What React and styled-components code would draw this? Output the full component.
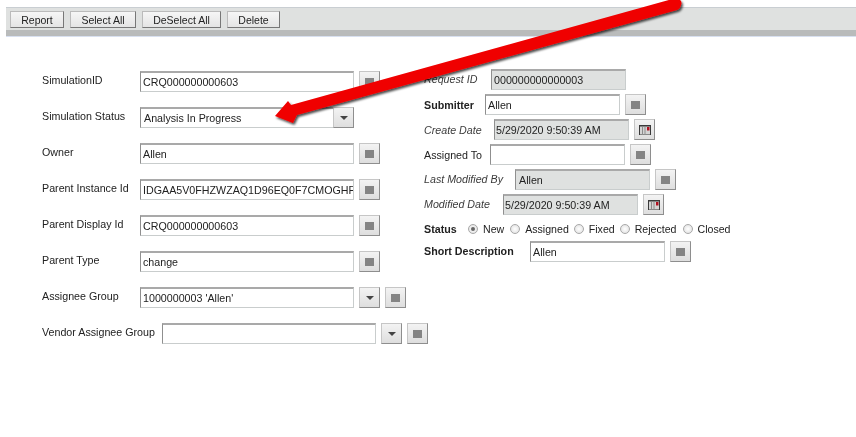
import React from "react";
import styled, { createGlobalStyle } from "styled-components";

const Global = createGlobalStyle`
  html, body { margin: 0; padding: 0; background: #fff; }
  body { font-family: "Liberation Sans", Arial, sans-serif; color: #222; }
`;
const Page = styled.div`
  position: relative; width: 856px; height: 437px; overflow: hidden; background: #fff;
  padding-top: 7px; box-sizing: border-box; filter: blur(0.35px);
`;
const Toolbar = styled.div`
  margin-left: 6px; height: 29px; box-sizing: border-box; background: #dfe1e0;
  border-top: 1px solid #c9ced2; border-bottom: 6px solid #b9bbbb;
  box-shadow: 0 1px 0 #d8e0f0; display: flex; align-items: flex-start; gap: 6px; padding: 3px 0 0 4px;
`;
const ToolButton = styled.button`
  height: 17px; width: ${p => p.$w}px; padding: 0; box-sizing: border-box; background: linear-gradient(#f6f6f6, #e4e4e4);
  border: 1px solid #bbb; border-right-color: #777; border-bottom-color: #777; border-radius: 0;
  font: 10.5px "Liberation Sans", Arial, sans-serif; color: #222;
`;
const Form = styled.div`display: flex; padding: 35px 0 0 42px;`;
const LeftCol = styled.div`width: 382px; display: flex; flex-direction: column; gap: 15px;`;
const RightCol = styled.div`display: flex; flex-direction: column; margin-top: -2px;`;
const Row = styled.div`display: flex; align-items: center; height: 21px;`;
const RRow = styled(Row)`margin-top: ${p => p.$mt ?? 4}px;`;
const Label = styled.span`
  width: ${p => p.$w}px; flex: none; font-size: 10.7px; white-space: nowrap; position: relative; top: ${p => p.$top ?? -2}px;
  font-weight: ${p => p.$bold ? 700 : 400}; font-style: ${p => p.$italic ? "italic" : "normal"};
  color: ${p => p.$italic ? "#3c3c3c" : "#222"};
`;
const Field = styled.div`
  width: ${p => p.$w || 214}px; height: 21px; flex: none; box-sizing: border-box; display: flex; align-items: center; overflow: hidden;
  padding: 0 0 0 ${p => p.$pl ?? 2}px; background: ${p => p.$ro ? "#dfe1e0" : "#fff"}; white-space: nowrap; font-size: 10.7px; color: #222;
  border: 1px solid #c9cdcd; border-top: 2px solid #a9a9a9; border-left: 1px solid #8f8f8f;
`;
const SquareBtn = styled.div`
  width: 21px; height: 21px; flex: none; box-sizing: border-box; margin-left: ${p => p.$ml ?? 5}px;
  display: flex; align-items: center; justify-content: center; background: linear-gradient(#f3f3f3, #dedede);
  border: 1px solid #c6c6c6; border-right-color: #8e8e8e; border-bottom-color: #8e8e8e;
`;
const Square = styled.i`display: block; width: 9px; height: 8px; background: #848484;`;
const Caret = styled.i`display: block; width: 0; height: 0; border: 4px solid transparent; border-top: 4px solid #444; border-bottom: 0;`;
const Radio = styled.span`
  width: 10px; height: 10px; flex: none; box-sizing: border-box; border-radius: 50%; border: 1px solid #a8a8a8; background: radial-gradient(#fff, #ddd);
  display: flex; align-items: center; justify-content: center; margin: 0 5px 0 ${p => p.$ml}px;
  &::after { content: ""; width: 4px; height: 4px; border-radius: 50%; background: ${p => p.$on ? "#666" : "transparent"}; }
`;
const RadioText = styled.span`font-size: 10.6px;`;
const StatusRow = styled.div`display: flex; align-items: center; height: 14px; margin-top: 7px;`;
const Arrow = styled.svg`position: absolute; left: 0; top: 0; pointer-events: none;`;

const Dots = () => <Square />;
const Cal = () => (
  <svg width="12" height="10" viewBox="0 0 12 10">
    <rect width="12" height="10" fill="#3a3a3a" />
    <rect x="1" y="1.5" width="10" height="8" fill="#d4d4d4" />
    <path d="M3.5 2v8M6 2v8" stroke="#8c8c8c" />
    <rect x="8" y="2" width="2.5" height="3.5" fill="#b01020" />
  </svg>
);
const leftRows = [
  ["SimulationID", "CRQ000000000603"],
  ["Simulation Status", "Analysis In Progress", "select"],
  ["Owner", "Allen"],
  ["Parent Instance Id", "IDGAA5V0FHZWZAQ1D96EQ0F7CMOGHF"],
  ["Parent Display Id", "CRQ000000000603"],
  ["Parent Type", "change"],
  ["Assignee Group", "1000000003 'Allen'", "both"],
];

export default function App() {
  return (
    <Page>
      <Global />
      <Toolbar>
        <ToolButton $w={54}>Report</ToolButton>
        <ToolButton $w={66}>Select All</ToolButton>
        <ToolButton $w={79}>DeSelect All</ToolButton>
        <ToolButton $w={53}>Delete</ToolButton>
      </Toolbar>
      <Form>
        <LeftCol>
          {leftRows.map(([l, v, k]) => (
            <Row key={l}>
              <Label $w={98}>{l}</Label>
              <Field $pl={k === "select" ? 3 : 2}>{v}</Field>
              {k === "select" ? (
                <SquareBtn $ml={-21}><Caret /></SquareBtn>
              ) : k === "both" ? (
                <>
                  <SquareBtn><Caret /></SquareBtn>
                  <SquareBtn><Dots /></SquareBtn>
                </>
              ) : (
                <SquareBtn><Dots /></SquareBtn>
              )}
            </Row>
          ))}
          <Row>
            <Label $w={120}>Vendor Assignee Group</Label>
            <Field />
            <SquareBtn><Caret /></SquareBtn>
            <SquareBtn><Dots /></SquareBtn>
          </Row>
        </LeftCol>
        <RightCol>
          <RRow $mt={0}><Label $w={67} $italic $top={-1}>Request ID</Label><Field $w={135} $ro>000000000000003</Field></RRow>
          <RRow><Label $w={61} $bold $top={0}>Submitter</Label><Field $w={135}>Allen</Field><SquareBtn><Dots /></SquareBtn></RRow>
          <RRow><Label $w={70} $italic $top={0}>Create Date</Label><Field $w={135} $ro $pl={1}>5/29/2020 9:50:39 AM</Field><SquareBtn><Cal /></SquareBtn></RRow>
          <RRow><Label $w={66} $top={0}>Assigned To</Label><Field $w={135} /><SquareBtn><Dots /></SquareBtn></RRow>
          <RRow><Label $w={91} $italic $top={-1}>Last Modified By</Label><Field $w={135} $ro $pl={3}>Allen</Field><SquareBtn><Dots /></SquareBtn></RRow>
          <RRow><Label $w={79} $italic $top={-1}>Modified Date</Label><Field $w={135} $ro $pl={1}>5/29/2020 9:50:39 AM</Field><SquareBtn><Cal /></SquareBtn></RRow>
          <StatusRow>
            <Label $w={36} $bold $top={0}>Status</Label>
            <Radio $ml={8} $on /><RadioText>New</RadioText>
            <Radio $ml={6} /><RadioText>Assigned</RadioText>
            <Radio $ml={5} /><RadioText>Fixed</RadioText>
            <Radio $ml={5} /><RadioText>Rejected</RadioText>
            <Radio $ml={6} /><RadioText>Closed</RadioText>
          </StatusRow>
          <RRow $mt={5}><Label $w={106} $bold $top={-1}>Short Description</Label><Field $w={135}>Allen</Field><SquareBtn><Dots /></SquareBtn></RRow>
        </RightCol>
      </Form>
      <Arrow width="856" height="437" viewBox="0 0 856 437">
        <defs>
          <filter id="sh" x="-5%" y="-10%" width="110%" height="130%">
            <feDropShadow dx="1.5" dy="2" stdDeviation="1.2" floodColor="#000" floodOpacity="0.7" />
          </filter>
        </defs>
        <path
          d="M275 116 L288 101 L291 105 L676 -2 Q683 0 681 5 Q680 9 677 10 L297 115 L293 123 Z"
          fill="#f00000"
          filter="url(#sh)"
        />
      </Arrow>
    </Page>
  );
}
